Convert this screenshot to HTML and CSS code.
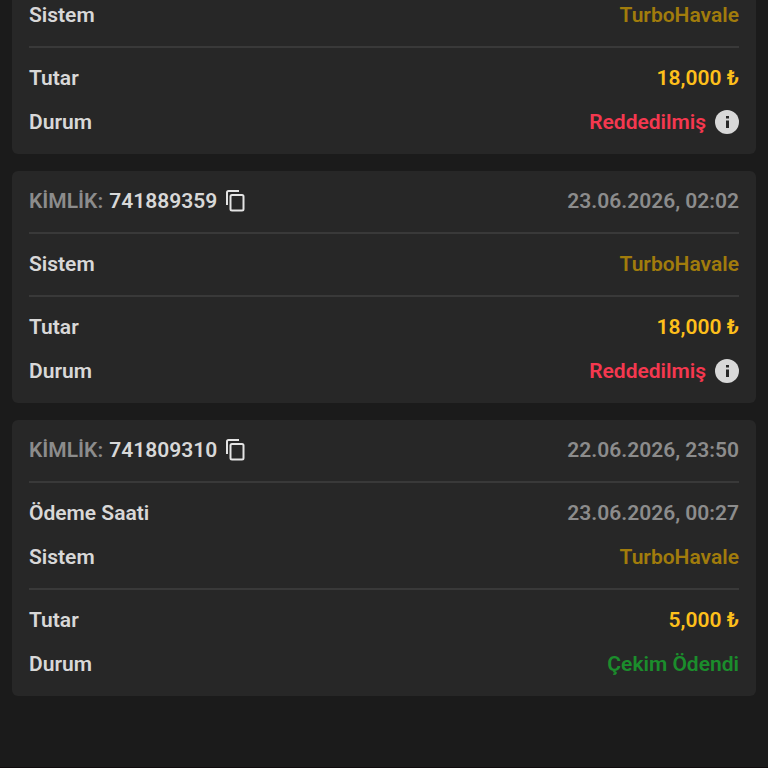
FILE: index.html
```
<!DOCTYPE html>
<html lang="tr">

<head>
	<title>İşlem geçmişi</title>
	<meta charset="utf-8">
	<meta name="viewport" content="width=device-width, initial-scale=1">
	<link rel="stylesheet" href="styles.css">
</head>

<body>
	<main class="history">

		<article class="card card-continued">
			<dl class="section">
				<div class="row"><dt>Sistem</dt><dd class="system">TurboHavale</dd></div>
			</dl>
			<dl class="section">
				<div class="row"><dt>Tutar</dt><dd class="amount">18,000 ₺</dd></div>
				<div class="row">
					<dt>Durum</dt>
					<dd class="rejected">Reddedilmiş
						<button type="button" class="info" aria-label="Bilgi">
							<svg viewBox="0 0 24 24"><circle cx="12" cy="12" r="12" fill="#d8d8d8"/><path d="M11 6h3v2.500h-3zM11 10.500h3V18h-3z" fill="#272727"/></svg>
						</button>
					</dd>
				</div>
			</dl>
		</article>

		<article class="card">
			<header class="section row">
				<div class="ident"><span class="muted">KİMLİK:</span> 741889359
					<button type="button" class="copy" aria-label="Kopyala">
						<svg viewBox="0 0 20 22"><path d="M2 15V2.500Q2 1 3.500 1H14M7 5h10q1.500 0 1.500 1.500V19q0 1.500-1.500 1.500H7q-1.500 0-1.500-1.500V6.500Q5.500 5 7 5z" fill="none" stroke="#e4e4e4" stroke-width="2"/></svg>
					</button>
				</div>
				<time class="muted" datetime="2026-06-23T02:02">23.06.2026, 02:02</time>
			</header>
			<dl class="section">
				<div class="row"><dt>Sistem</dt><dd class="system">TurboHavale</dd></div>
			</dl>
			<dl class="section">
				<div class="row"><dt>Tutar</dt><dd class="amount">18,000 ₺</dd></div>
				<div class="row">
					<dt>Durum</dt>
					<dd class="rejected">Reddedilmiş
						<button type="button" class="info" aria-label="Bilgi">
							<svg viewBox="0 0 24 24"><circle cx="12" cy="12" r="12" fill="#d8d8d8"/><path d="M11 6h3v2.500h-3zM11 10.500h3V18h-3z" fill="#272727"/></svg>
						</button>
					</dd>
				</div>
			</dl>
		</article>

		<article class="card">
			<header class="section row">
				<div class="ident"><span class="muted">KİMLİK:</span> 741809310
					<button type="button" class="copy" aria-label="Kopyala">
						<svg viewBox="0 0 20 22"><path d="M2 15V2.500Q2 1 3.500 1H14M7 5h10q1.500 0 1.500 1.500V19q0 1.500-1.500 1.500H7q-1.500 0-1.500-1.500V6.500Q5.500 5 7 5z" fill="none" stroke="#e4e4e4" stroke-width="2"/></svg>
					</button>
				</div>
				<time class="muted" datetime="2026-06-22T23:50">22.06.2026, 23:50</time>
			</header>
			<dl class="section">
				<div class="row"><dt>Ödeme Saati</dt><dd class="muted">23.06.2026, 00:27</dd></div>
				<div class="row"><dt>Sistem</dt><dd class="system">TurboHavale</dd></div>
			</dl>
			<dl class="section">
				<div class="row"><dt>Tutar</dt><dd class="amount">5,000 ₺</dd></div>
				<div class="row"><dt>Durum</dt><dd class="paid">Çekim Ödendi</dd></div>
			</dl>
		</article>

	</main>
</body>

</html>
```
FILE: styles.css
```
* {
    box-sizing: border-box;
}

body {
    margin: 0;
    min-height: 100vh;
    background-color: #1b1b1b;
    border-bottom: 1px solid #100c0d;
    color: #d8d8d8;
    font-family: Roboto, "Liberation Sans", sans-serif;
    font-size: 21px;
    font-weight: 600;
    line-height: 28px;
}

.history {
    display: flex;
    flex-direction: column;
    gap: 17px;
    padding: 0 12px;
}

.card {
    padding: 16px 17px 18px;
    background-color: #272727;
    border-radius: 6px;
}

/* first card runs on from above the window */
.card-continued {
    padding-top: 1px;
    border-radius: 0 0 6px 6px;
}

.section {
    margin: 0;
}

.section + .section {
    margin-top: 17px;
    padding-top: 16px;
    border-top: 2px solid #393939;
}

.row {
    display: flex;
    justify-content: space-between;
    align-items: center;
    height: 28px;
}

.row + .row {
    margin-top: 16px;
}

dd {
    margin: 0;
}

.ident,
.rejected {
    display: flex;
    align-items: center;
}

.ident {
    gap: 6px;
}

.rejected {
    gap: 9px;
    color: #f5384f;
}

.muted {
    color: #8c8c8c;
}

.system {
    color: #a17c0c;
}

.amount {
    color: #fdbf1b;
}

.paid {
    color: #1b8d2c;
}

button {
    padding: 0;
    border: none;
    background: none;
    cursor: pointer;
}

button svg {
    display: block;
}

.info {
    width: 24px;
    height: 24px;
}

.copy {
    width: 20px;
    height: 22px;
    margin-left: 2px;
}
```
